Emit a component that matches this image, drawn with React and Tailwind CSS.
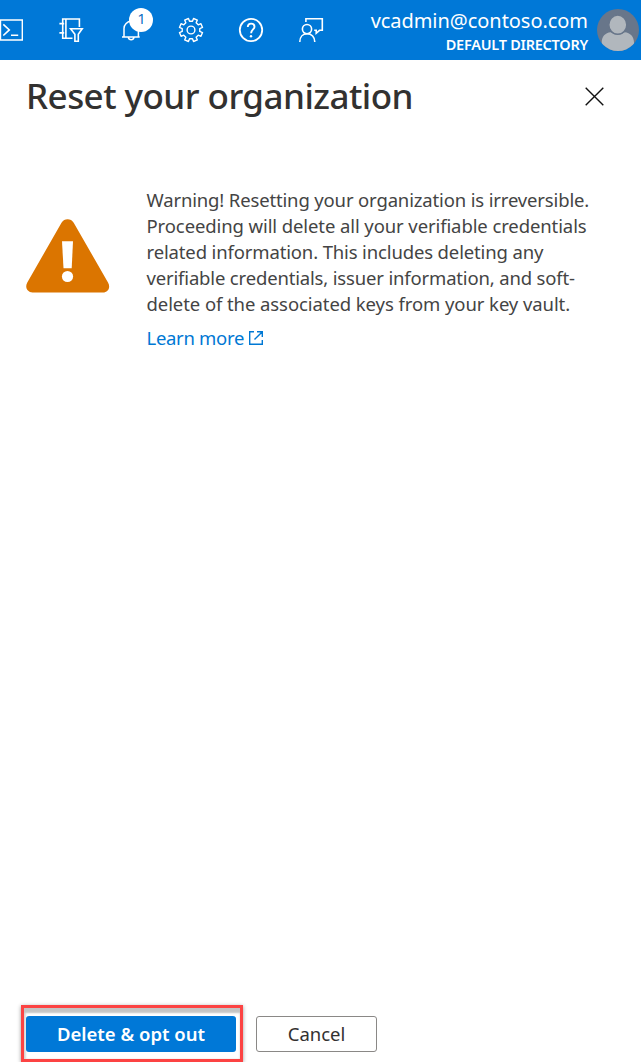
const WARNING_LINES = [
  { text: 'Warning! Resetting your organization is irreversible.', tracking: 'tracking-[-0.15px]' },
  { text: 'Proceeding will delete all your verifiable credentials', tracking: 'tracking-[-0.1px]' },
  { text: 'related information. This includes deleting any', tracking: 'tracking-[-0.14px]' },
  { text: 'verifiable credentials, issuer information, and soft-', tracking: 'tracking-[-0.165px]' },
  { text: 'delete of the associated keys from your key vault.', tracking: 'tracking-[-0.08px]' },
];

// Outline of an eight-toothed gear centred in a 24-unit box: two outer and two inner corners per tooth.
const GEAR_POINTS = Array.from({ length: 8 }, (_, i) => {
  const centre = 22.5 + i * 45;
  return [[-13, 8.9], [-10, 11.8], [10, 11.8], [13, 8.9]]
    .map(([offset, radius]) => {
      const angle = ((centre + offset) * Math.PI) / 180;
      return `${(12 + radius * Math.cos(angle)).toFixed(2)},${(12 + radius * Math.sin(angle)).toFixed(2)}`;
    })
    .join(' ');
}).join(' ');

function Icon({ children, label }) {
  return (
    <button aria-label={label} className="flex h-full w-[60px] shrink-0 items-center justify-center">
      <svg className="size-6 overflow-visible" viewBox="0 0 24 24" fill="none" stroke="#fff" strokeWidth="1.6">
        {children}
      </svg>
    </button>
  );
}

function TopBar() {
  return (
    <header className="flex h-[60px] shrink-0 items-center bg-[#0078d7] text-white">
      <div className="-ml-[19px] flex h-full shrink-0 items-center">
        <Icon label="Cloud Shell">
          <path d="M1.5 2h21.8v20H1.5z" strokeWidth="1.4" />
          <path d="m4.3 6.3 6 5.6-6 5.6M12 17.2h7.2" />
        </Icon>
        <Icon label="Directories and subscriptions">
          <path d="M20.4 9V1H3.7v19.3h9.8M6.9 1v19.3M.4 5.6h4.8M.4 14.9h4.8" />
          <path d="M11.6 10.8h11.6l-3.9 5.5v7h-3.4v-7z" />
        </Icon>
        <div className="relative h-full">
          <Icon label="Notifications">
            <path d="M5 19v-8.5a7.2 7.2 0 0 1 14.4 0V19M3 19h17.7M9.3 19.3a2.9 2.9 0 0 0 5.7 0" strokeWidth="1.5" />
          </Icon>
          <span className="absolute left-[28px] top-2 flex size-6 items-center justify-center rounded-full bg-white pb-[3px] pl-px font-['Open_Sans',sans-serif] text-[15px] leading-none text-[#0067c0]">1</span>
        </div>
        <Icon label="Settings">
          <polygon points={GEAR_POINTS} strokeWidth="1.4" strokeLinejoin="round" />
          <circle cx="12" cy="12" r="3.9" strokeWidth="1.4" />
        </Icon>
        <Icon label="Help">
          <circle cx="12" cy="12" r="11.2" strokeWidth="1.8" />
          <path d="M8.8 9c0-2.2 1.3-3.4 3.3-3.4s3.4 1.2 3.4 3.1c0 2.6-3.4 3-3.4 6.6" strokeWidth="1.9" />
          <circle cx="12" cy="18.2" r="1.2" fill="#fff" stroke="none" />
        </Icon>
        <Icon label="Feedback">
          <path d="M6.9 4V.7h16.4v11.6h-2.8l-3.3 3v-3h-2" />
          <circle cx="8" cy="11.1" r="4.6" />
          <path d="M.8 24c0-5 3-8.2 7.4-8.2s7.6 3.2 7.6 8.2" />
        </Icon>
      </div>
      <div className="ml-auto flex items-center gap-[9px] pr-[2px]">
        <div className="flex flex-col items-end whitespace-nowrap pt-[3px]">
          <span className="text-[20px] leading-6 tracking-[-0.05px]">vcadmin@contoso.com</span>
          <span className="text-[14.5px] font-semibold leading-[22px] tracking-[-0.25px]">DEFAULT DIRECTORY</span>
        </div>
        <svg className="size-[42px] shrink-0" viewBox="0 0 42 42">
          <clipPath id="avatar"><circle cx="21" cy="21" r="21" /></clipPath>
          <g clipPath="url(#avatar)">
            <path fill="#68768a" d="M0 0h42v42H0z" />
            <path fill="#b1b7bd" d="M4.7 42V33.5c0-6 3.5-9.7 9-10.3 4 3.4 10 3.4 14 0 5.5.6 9.3 4.3 9.3 10.3V42z" />
            <ellipse cx="20.8" cy="15.7" rx="9" ry="9.6" fill="#b1b7bd" stroke="#68768a" strokeWidth="1.4" />
          </g>
        </svg>
      </div>
    </header>
  );
}

export default function App() {
  return (
    <div className="flex h-[1062px] w-[641px] flex-col overflow-hidden bg-white font-['Noto_Sans',sans-serif] text-[#323130]">
      <TopBar />
      <div className="flex h-[72px] items-center justify-between pl-[26px] pr-[37.5px]">
        <h1 className="whitespace-nowrap text-[35px] font-medium leading-[48px] tracking-[-0.54px]">Reset your organization</h1>
        <button aria-label="Close">
          <svg className="size-[19px]" viewBox="0 0 19 19" fill="none" stroke="#111" strokeWidth="1.4">
            <path d="m.7.7 17.6 17.6M18.3.7.7 18.3" />
          </svg>
        </button>
      </div>
      <main className="flex flex-1 items-start pl-[26px] pt-[55px]">
        <svg className="mt-8 h-[74px] w-[84px] shrink-0" viewBox="0 0 84 74">
          <path fill="#db7500" d="M35.5 3.7C38.2-.8 45-.8 47.7 3.7L82 63.5c3 5-.2 10-5 10H6.5c-5 0-8-5-5.2-10z" />
          <path fill="#fff" d="M36 22.3h11l-1.3 27h-8.2z" />
          <circle cx="41.5" cy="57.5" r="5.6" fill="#fff" />
        </svg>
        <div className="ml-[36.5px] text-[18.5px] leading-[26px] text-[#444]">
          <p className="flex flex-col items-start whitespace-nowrap">
            {WARNING_LINES.map((line) => (
              <span key={line.text} className={line.tracking}>{line.text}</span>
            ))}
          </p>
          <a href="#learn" className="mt-2 flex items-center gap-[5px] text-[#0078d4]">
            <span className="tracking-[-0.3px]">Learn more</span>
            <svg className="size-[14px]" viewBox="0 0 14 14" fill="none" stroke="currentColor" strokeWidth="1.4">
              <path d="M5 .7H.7v12.6h12.6V9M8 .7h5.3V6M13.3.7 5.5 8.5" />
            </svg>
          </a>
        </div>
      </main>
      <footer className="flex h-[57px] shrink-0 items-start gap-[13px] pl-[21px]">
        <div className="h-[57px] w-[222px] border-[3px] border-[#fc4343] pl-[2px] pt-2 shadow-[0_1px_4px_rgba(0,0,0,0.4),inset_0_5px_2px_#c4c4c4,inset_2px_0_2px_#ddd]">
          <button className="h-9 w-[210px] rounded-[3px] bg-[#0078d7] text-[18.5px] font-semibold text-white">Delete &amp; opt out</button>
        </div>
        <button className="mt-[11px] h-9 w-[121px] rounded-[3px] border border-[#8a8886] bg-white text-[18.5px]">Cancel</button>
      </footer>
    </div>
  );
}
